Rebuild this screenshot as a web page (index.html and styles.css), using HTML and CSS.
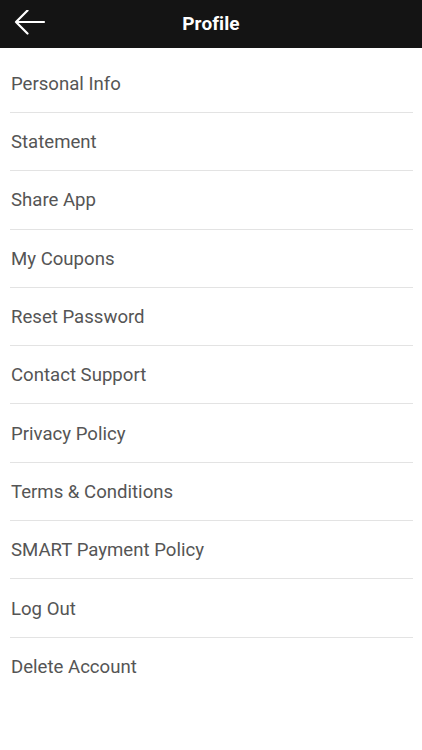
FILE: index.html
```html
<!DOCTYPE html>
<html lang="en">
<head>
<meta charset="utf-8">
<title>Profile</title>
<link rel="stylesheet" href="styles.css">
</head>
<body>
<header class="topbar">
  <button class="back" aria-label="Back">
    <svg width="32" height="28" viewBox="0 0 32 28" aria-hidden="true">
      <path d="M2 12 H30 M13.5 0.5 L2 12 L13.5 23.5" fill="none" stroke="#fff" stroke-width="2.2" stroke-linecap="round" stroke-linejoin="round"/>
    </svg>
  </button>
  <h1 class="title">Profile</h1>
</header>
<ul class="menu">
  <li class="item">Personal Info</li>
  <li class="item">Statement</li>
  <li class="item">Share App</li>
  <li class="item">My Coupons</li>
  <li class="item">Reset Password</li>
  <li class="item">Contact Support</li>
  <li class="item">Privacy Policy</li>
  <li class="item">Terms &amp; Conditions</li>
  <li class="item">SMART Payment Policy</li>
  <li class="item">Log Out</li>
  <li class="item last">Delete Account</li>
</ul>
</body>
</html>
```

FILE: styles.css
```css
html, body {
  margin: 0;
  padding: 0;
  background: #fff;
  font-family: Roboto, "Liberation Sans", sans-serif;
}
.topbar {
  height: 48px;
  background: #141414;
  display: flex;
  align-items: center;
  justify-content: center;
  position: relative;
}
.back {
  position: absolute;
  left: 14px;
  top: 10px;
  background: none;
  border: 0;
  padding: 0;
  width: 32px;
  height: 28px;
  display: block;
}
.back svg { display: block; }
.title {
  margin: 0;
  color: #fff;
  font-size: 19px;
  font-weight: 700;
  letter-spacing: 0.1px;
  padding-bottom: 2px;
}
.menu {
  list-style: none;
  margin: 0;
  padding: 6.7px 0 0 0;
}
.item {
  height: 58.3px;
  box-sizing: border-box;
  margin: 0 9px 0 10px;
  padding: 1px 0 0 1px;
  border-bottom: 1px solid #e3e3e3;
  display: flex;
  align-items: center;
  color: #555;
  font-size: 18.6px;
}
.item.last { border-bottom-color: transparent; }
```
